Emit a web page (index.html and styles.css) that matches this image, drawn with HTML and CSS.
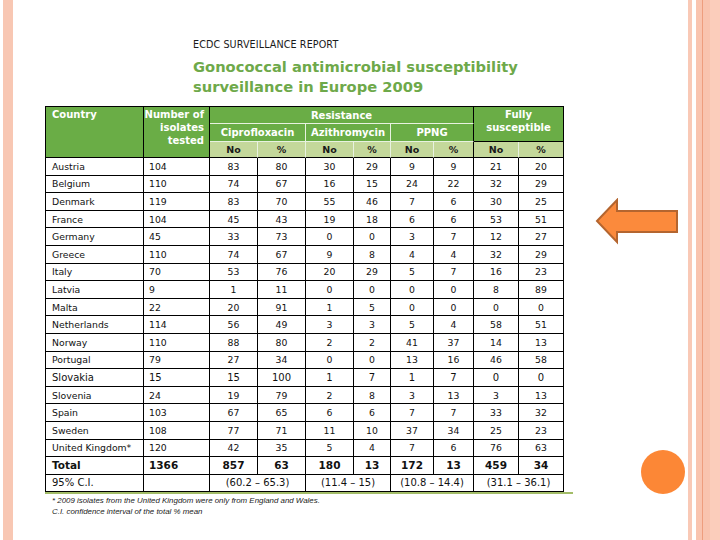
FILE: index.html
```html
<!DOCTYPE html>
<html>
<head>
<meta charset="utf-8">
<link rel="stylesheet" href="styles.css">
</head>
<body>
<div class="slide">
  <div class="stripe-left"></div>
  <main class="content">
    <div class="report-label">ECDC SURVEILLANCE REPORT</div>
    <h1 class="title">Gonococcal antimicrobial susceptibility<br>surveillance in Europe 2009</h1>
    <table class="data">
      <colgroup>
        <col class="c-country"><col class="c-num">
        <col class="c48"><col class="c48"><col class="c48"><col class="c37">
        <col class="c43"><col class="c40"><col class="c45"><col class="c45">
      </colgroup>
      <thead>
        <tr class="h1">
          <th rowspan="3" class="th-country">Country</th>
          <th rowspan="3" class="th-num">Number of<br>isolates<br>tested</th>
          <th colspan="6" class="th-res">Resistance</th>
          <th colspan="2" rowspan="2" class="th-fully">Fully<br>susceptible</th>
        </tr>
        <tr class="h2">
          <th colspan="2" class="th-drug w-r w-b">Ciprofloxacin</th>
          <th colspan="2" class="th-drug w-r w-b">Azithromycin</th>
          <th colspan="2" class="th-drug w-b">PPNG</th>
        </tr>
        <tr class="h3">
          <th class="sub w-r">No</th><th class="sub w-r">%</th>
          <th class="sub w-r">No</th><th class="sub w-r">%</th>
          <th class="sub w-r">No</th><th class="sub">%</th>
          <th class="sub w-r">No</th><th class="sub">%</th>
        </tr>
      </thead>
      <tbody>
        <tr><td class="country">Austria</td><td class="num">104</td><td>83</td><td>80</td><td>30</td><td>29</td><td>9</td><td>9</td><td>21</td><td>20</td></tr>
        <tr><td class="country">Belgium</td><td class="num">110</td><td>74</td><td>67</td><td>16</td><td>15</td><td>24</td><td>22</td><td>32</td><td>29</td></tr>
        <tr><td class="country">Denmark</td><td class="num">119</td><td>83</td><td>70</td><td>55</td><td>46</td><td>7</td><td>6</td><td>30</td><td>25</td></tr>
        <tr><td class="country">France</td><td class="num">104</td><td>45</td><td>43</td><td>19</td><td>18</td><td>6</td><td>6</td><td>53</td><td>51</td></tr>
        <tr><td class="country">Germany</td><td class="num">45</td><td>33</td><td>73</td><td>0</td><td>0</td><td>3</td><td>7</td><td>12</td><td>27</td></tr>
        <tr><td class="country">Greece</td><td class="num">110</td><td>74</td><td>67</td><td>9</td><td>8</td><td>4</td><td>4</td><td>32</td><td>29</td></tr>
        <tr><td class="country">Italy</td><td class="num">70</td><td>53</td><td>76</td><td>20</td><td>29</td><td>5</td><td>7</td><td>16</td><td>23</td></tr>
        <tr><td class="country">Latvia</td><td class="num">9</td><td>1</td><td>11</td><td>0</td><td>0</td><td>0</td><td>0</td><td>8</td><td>89</td></tr>
        <tr><td class="country">Malta</td><td class="num">22</td><td>20</td><td>91</td><td>1</td><td>5</td><td>0</td><td>0</td><td>0</td><td>0</td></tr>
        <tr><td class="country">Netherlands</td><td class="num">114</td><td>56</td><td>49</td><td>3</td><td>3</td><td>5</td><td>4</td><td>58</td><td>51</td></tr>
        <tr><td class="country">Norway</td><td class="num">110</td><td>88</td><td>80</td><td>2</td><td>2</td><td>41</td><td>37</td><td>14</td><td>13</td></tr>
        <tr><td class="country">Portugal</td><td class="num">79</td><td>27</td><td>34</td><td>0</td><td>0</td><td>13</td><td>16</td><td>46</td><td>58</td></tr>
        <tr class="big"><td class="country">Slovakia</td><td class="num">15</td><td>15</td><td>100</td><td>1</td><td>7</td><td>1</td><td>7</td><td>0</td><td>0</td></tr>
        <tr><td class="country">Slovenia</td><td class="num">24</td><td>19</td><td>79</td><td>2</td><td>8</td><td>3</td><td>13</td><td>3</td><td>13</td></tr>
        <tr><td class="country">Spain</td><td class="num">103</td><td>67</td><td>65</td><td>6</td><td>6</td><td>7</td><td>7</td><td>33</td><td>32</td></tr>
        <tr><td class="country">Sweden</td><td class="num">108</td><td>77</td><td>71</td><td>11</td><td>10</td><td>37</td><td>34</td><td>25</td><td>23</td></tr>
        <tr><td class="country">United Kingdom*</td><td class="num">120</td><td>42</td><td>35</td><td>5</td><td>4</td><td>7</td><td>6</td><td>76</td><td>63</td></tr>
        <tr class="total"><td class="country">Total</td><td class="num">1366</td><td>857</td><td>63</td><td>180</td><td>13</td><td>172</td><td>13</td><td>459</td><td>34</td></tr>
        <tr class="ci"><td class="country">95% C.I.</td><td class="num"></td><td colspan="2">(60.2 – 65.3)</td><td colspan="2">(11.4 – 15)</td><td colspan="2">(10.8 – 14.4)</td><td colspan="2">(31.1 – 36.1)</td></tr>
      </tbody>
    </table>
    <div class="rule"></div>
    <p class="note">* 2009 isolates from the United Kingdom were only from England and Wales.<br>C.I. confidence interval of the total % mean</p>
  </main>
  <div class="stripe-right">
    <div class="band b1"></div>
    <div class="band gap"></div>
    <div class="band b2"></div>
    <div class="band line"></div>
    <div class="band b3"></div>
    <div class="band b4"></div>
  </div>
  <svg class="arrow" width="85" height="47" viewBox="0 0 85 47">
    <path d="M2 23 L22 2 L22 13 L82 13 L82 34 L22 34 L22 44 Z" fill="#fb8a3c" stroke="#b4652f" stroke-width="2" stroke-linejoin="miter"/>
  </svg>
  <div class="dot"></div>
</div>
</body>
</html>
```

FILE: styles.css
```css
html, body {
  margin: 0;
  padding: 0;
  background: #ffffff;
}

.slide {
  position: relative;
  width: 720px;
  height: 540px;
  display: flex;
  overflow: hidden;
  background: #ffffff;
  font-family: "DejaVu Sans", Verdana, sans-serif;
}

.stripe-left {
  margin-left: 3px;
  width: 10px;
  background: #f8c7b3;
  flex: none;
}

.content {
  flex: 1;
  padding: 39px 0 0 32px;
}

.report-label {
  margin-left: 148px;
  font-size: 9.6px;
  line-height: 12px;
  color: #1a1a1a;
  letter-spacing: 0.1px;
}

.title {
  margin: 6px 0 9px 148px;
  font-size: 14.7px;
  line-height: 20px;
  font-weight: bold;
  color: #6ea94a;
}

.data {
  width: 518px;
  table-layout: fixed;
  border-collapse: separate;
  border-spacing: 0;
  border-top: 1px solid #000;
  border-left: 1px solid #000;
  font-size: 9.3px;
  color: #111;
}

.c-country { width: 98px; }
.c-num { width: 66px; }
.c48 { width: 48px; }
.c37 { width: 37px; }
.c43 { width: 43px; }
.c40 { width: 40px; }
.c45 { width: 45px; }

.data th,
.data td {
  border-right: 1px solid #000;
  border-bottom: 1px solid #000;
  padding: 0;
  text-align: center;
  vertical-align: middle;
}

.data th {
  background: #6aad46;
  color: #ffffff;
  font-weight: bold;
  font-size: 10px;
  line-height: 13px;
}

.data .w-r { border-right-color: #e8f2e0; }
.data .w-b { border-bottom-color: #e8f2e0; }

.h1 { height: 17px; }
.h2 { height: 18px; }
.h3 { height: 16px; }

.data th.th-country {
  text-align: left;
  vertical-align: top;
  padding: 1px 0 0 6px;
}

.data th.th-num {
  text-align: right;
  vertical-align: top;
  padding: 1px 5px 0 0;
}

.data th.th-res {
  border-bottom-color: #e8f2e0;
}

.data th.th-fully {
  vertical-align: top;
  padding-top: 1px;
}

.data th.sub {
  background: #c4d89b;
  color: #1a1a1a;
  font-size: 9.5px;
}

.data tbody tr { height: 17.6px; }

.data td.country {
  text-align: left;
  padding-left: 6px;
  white-space: nowrap;
}

.data td.num {
  text-align: left;
  padding-left: 5px;
}

.big td { font-size: 10px; }

.total td {
  font-weight: bold;
  font-size: 10.5px;
}

.ci td { font-size: 10px; }

.rule {
  width: 528px;
  height: 2px;
  background: #a3bd68;
}

.note {
  margin: 1px 0 0 7px;
  font-family: "Liberation Sans", Arial, sans-serif;
  font-style: italic;
  font-size: 7.9px;
  line-height: 11px;
  color: #222;
}

.stripe-right {
  flex: none;
  width: 32px;
  display: flex;
}

.band { height: 100%; }
.b1 { width: 4px; background: #f9c9b6; }
.gap { width: 4px; background: #ffffff; }
.b2 { width: 6px; background: #f9c4af; }
.line { width: 1px; background: #ee9e7e; }
.b3 { width: 7px; background: #f9c4af; }
.b4 { width: 10px; background: #fbcdbb; }

.arrow {
  position: absolute;
  left: 595px;
  top: 198px;
}

.dot {
  position: absolute;
  left: 641px;
  top: 450px;
  width: 44px;
  height: 44px;
  border-radius: 50%;
  background: #fc8736;
}
```
